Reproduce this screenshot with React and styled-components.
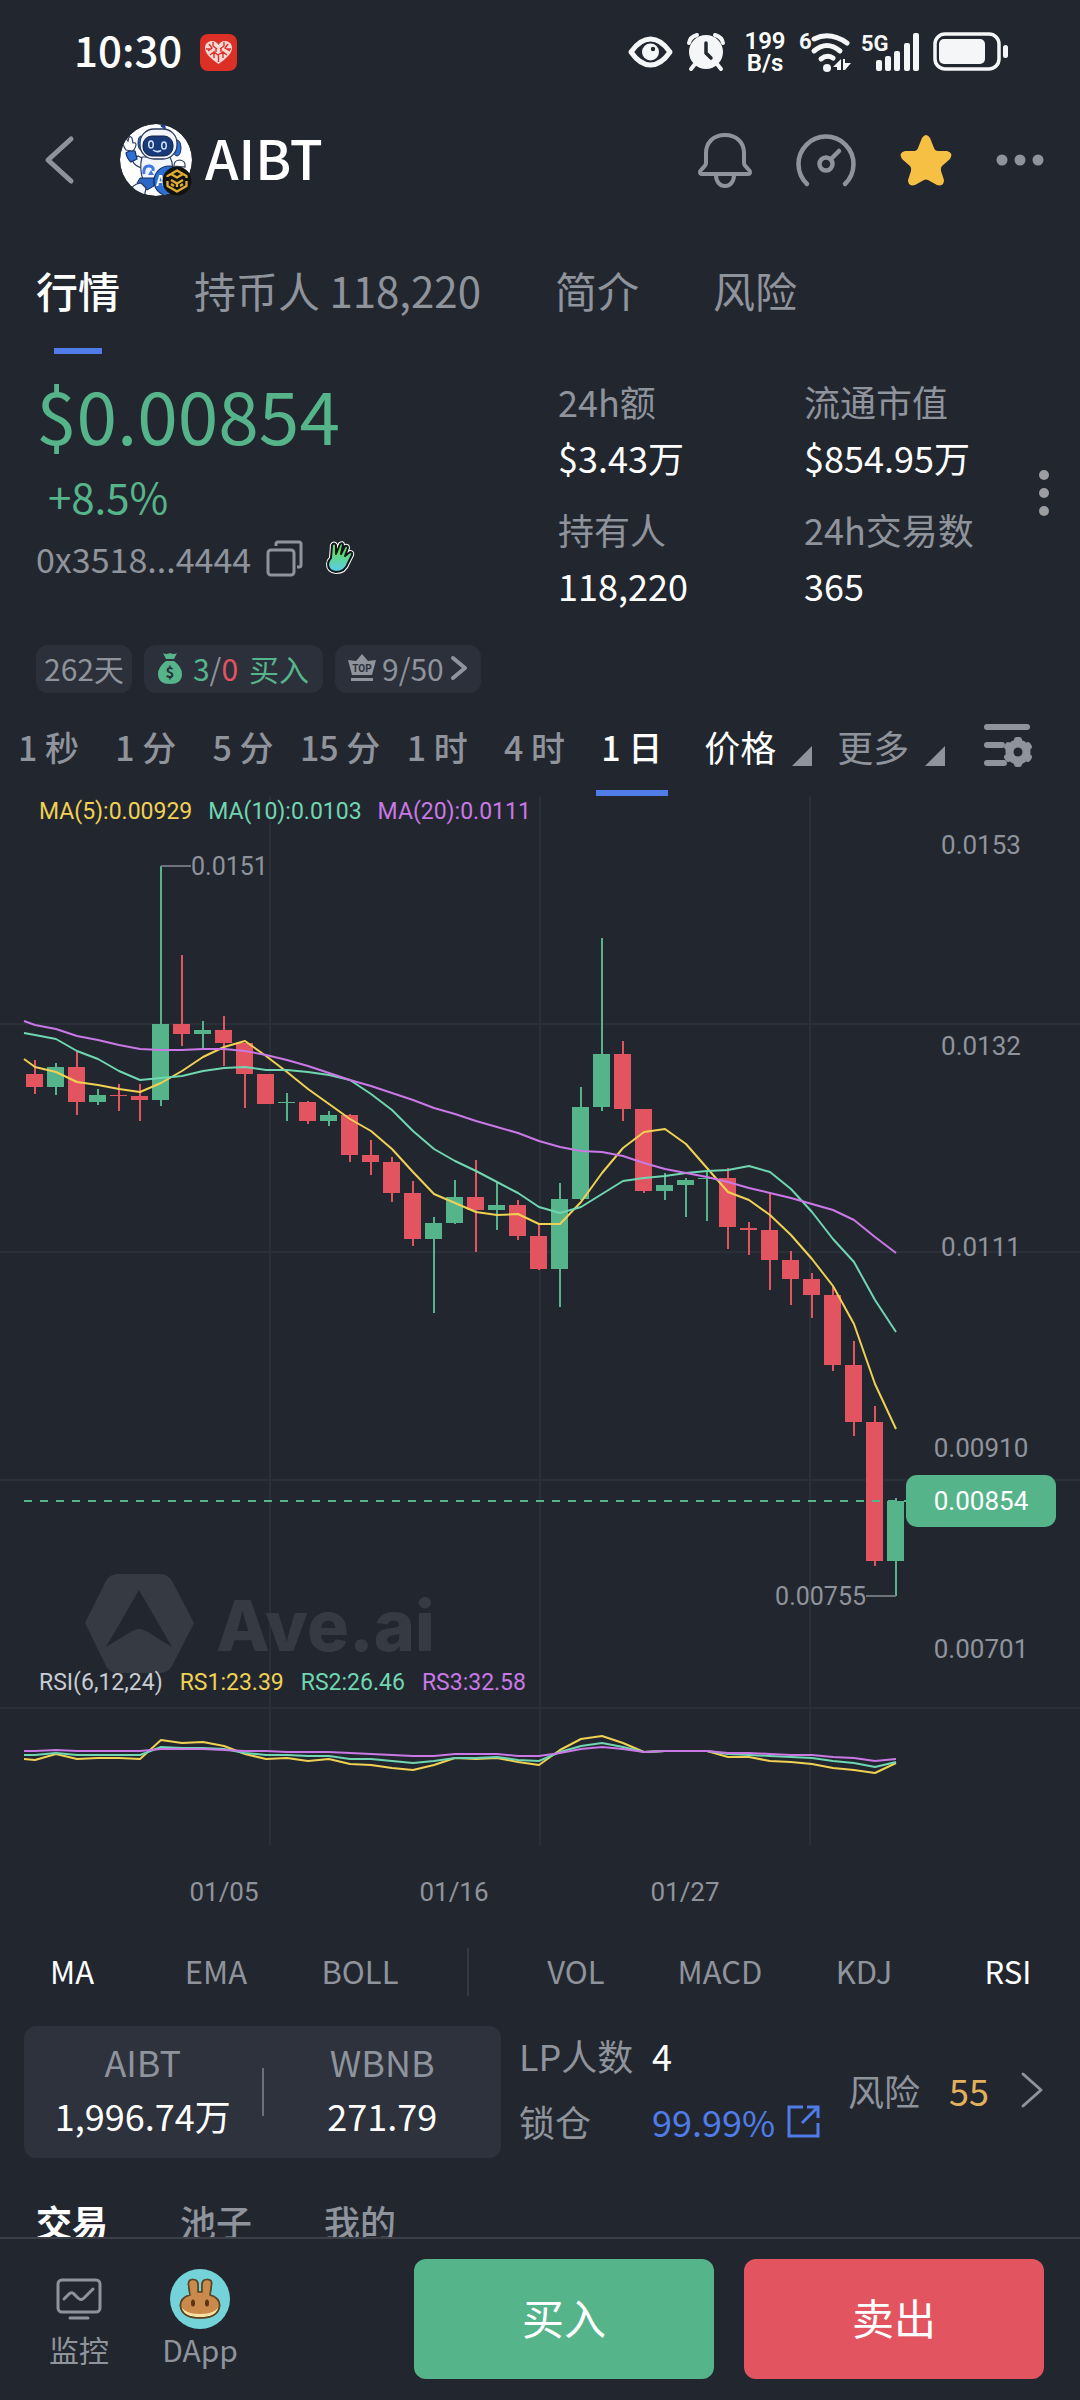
import React, { useState } from 'react';
import styled, { createGlobalStyle } from 'styled-components';

const GREEN = '#56b48a';
const RED = '#e25560';
const BLUE = '#4f7ce9';
const GRAY = '#8f939c';
const YELLOW = '#f0d154';
const MINT = '#6fd6b1';
const PURPLE = '#c978e6';

const GlobalStyle = createGlobalStyle`
    * {
        box-sizing : border-box;
    }
    body {
        margin : 0;
        background : #22272f;
        color : #ffffff;
        font-family : "Noto Sans CJK SC", "Noto Sans", sans-serif;
    }
    button {
        padding : 0;
        border : none;
        background : none;
        color : inherit;
        font : inherit;
        cursor : pointer;
    }
    svg {
        display : block;
        overflow : visible;
    }
`;

const Page = styled.div`
    display : flex;
    flex-direction : column;
    height : 100vh;
    overflow : hidden;
`;

const Content = styled.main`
    flex : 1;
    min-height : 0;
    overflow : hidden;
`;

/* status bar */

const StatusBar = styled.div`
    display : flex;
    align-items : center;
    height : 104px;
    padding : 0 71px 0 74px;
`;

const Clock = styled.span`
    margin-right : 18px;
    padding-bottom : 6px;
    font-size : 42px;
    font-weight : 500;
    line-height : 48px;
`;

const StatusIcons = styled.div`
    display : flex;
    align-items : center;
    margin-left : auto;
    gap : 12px;
    font-family : Roboto, sans-serif;
`;

const Speed = styled.div`
    display : flex;
    flex-direction : column;
    align-items : center;
    width : 48px;
    padding-left : 4px;
    font-size : 24px;
    font-weight : 600;
    line-height : 22px;
`;

/* header */

const Header = styled.header`
    display : flex;
    align-items : center;
    height : 112px;
    padding : 0 34px 0 44px;
`;

const Coin = styled.h1`
    display : flex;
    align-items : center;
    gap : 12px;
    margin : 0 auto 0 46px;
    font-size : 54px;
    font-weight : 500;
    line-height : 64px;
    span {
        padding-bottom : 6px;
    }
`;

const HeaderActions = styled.div`
    display : flex;
    align-items : center;
    gap : 44px;
    color : ${GRAY};
`;

const Tabs = styled.nav`
    display : flex;
    gap : 74px;
    margin-top : 43px;
    padding : 0 36px;
`;

const Tab = styled.button`
    display : flex;
    flex-direction : column;
    align-items : center;
    gap : 27px;
    color : ${props => props.$active ? '#ffffff' : GRAY};
    font-size : 42px;
    font-weight : ${props => props.$active ? 500 : 400};
    line-height : 62px;
    white-space : nowrap;
    &::after {
        content : "";
        width : 48px;
        height : 6px;
        background : ${props => props.$active ? BLUE : 'transparent'};
    }
`;

/* price summary */

const Summary = styled.section`
    display : grid;
    grid-template-columns : minmax(0, 87fr) 41fr 37fr 36px;
    padding : 23px 18px 0 36px;
`;

const Quote = styled.div`
    display : flex;
    flex-direction : column;
`;

const Price = styled.strong`
    color : ${GREEN};
    font-size : 73px;
    font-weight : 400;
    line-height : 72px;
`;

const Change = styled.span`
    margin-top : 23px;
    padding-left : 12px;
    color : ${GREEN};
    font-size : 42px;
    line-height : 48px;
`;

const Address = styled.div`
    display : flex;
    align-items : center;
    height : 40px;
    margin-top : 18px;
    color : ${GRAY};
    font-size : 34px;
    button {
        margin : 0 22px 0 15px;
    }
`;

const StatColumn = styled.dl`
    margin : 0;
    font-size : 36px;
    line-height : 48px;
    white-space : nowrap;
    dt {
        color : ${GRAY};
    }
    dd {
        margin : 8px 0 24px;
    }
    dd:last-child {
        margin-bottom : 0;
    }
`;

const DotsButton = styled.button`
    display : flex;
    align-items : center;
    justify-content : center;
    color : ${GRAY};
`;

const Chips = styled.div`
    display : flex;
    gap : 12px;
    margin-top : 36px;
    padding : 0 36px;
`;

const Chip = styled.button`
    display : flex;
    align-items : center;
    gap : ${props => props.$gap || 0}px;
    height : 48px;
    padding : 0 ${props => props.$pad}px 2px;
    border-radius : 12px;
    background : #2b303a;
    color : ${GRAY};
    font-size : 30px;
    line-height : 46px;
    white-space : nowrap;
`;

const Up = styled.span`
    color : ${GREEN};
`;

const Down = styled.span`
    color : ${RED};
`;

/* timeframes */

const Frames = styled.div`
    display : flex;
    margin-top : 9px;
`;

const Frame = styled.button`
    display : flex;
    flex : 0 0 9%;
    flex-direction : column;
    align-items : center;
    gap : 20px;
    padding-top : 22px;
    color : ${props => props.$active ? '#ffffff' : GRAY};
    font-size : 34px;
    font-weight : 500;
    line-height : 46px;
    white-space : nowrap;
    &::after {
        content : "";
        width : 72px;
        height : 6px;
        background : ${props => props.$active ? BLUE : 'transparent'};
    }
`;

const FrameMenus = styled.div`
    display : flex;
    flex : 1;
    align-items : flex-start;
    gap : 25px;
    padding : 21px 46px 0 24px;
    > :last-child {
        margin-left : auto;
    }
`;

const FrameMenu = styled.button`
    display : flex;
    align-items : flex-end;
    gap : 16px;
    color : ${props => props.$active ? '#ffffff' : GRAY};
    font-size : 36px;
    line-height : 46px;
    &::after {
        content : "";
        margin-bottom : 3px;
        border-left : 20px solid transparent;
        border-bottom : 20px solid ${GRAY};
    }
`;

const Chart = styled.svg`
    width : 100%;
    height : auto;
    font-family : Roboto, sans-serif;
`;

/* indicators and pool */

const Indicators = styled.div`
    display : grid;
    grid-template-columns : 2fr 2fr 2fr 1fr 2fr 2fr 2fr 2fr;
    align-items : center;
    height : 92px;
`;

const Indicator = styled.button`
    padding-bottom : 2px;
    color : ${props => props.$active ? '#ffffff' : GRAY};
    font-size : 31px;
    line-height : 48px;
`;

const Divider = styled.span`
    justify-self : center;
    width : 2px;
    height : 48px;
    background : ${props => props.$color};
`;

const Pool = styled.section`
    display : grid;
    grid-template-columns : 477fr 305fr 202fr;
    align-items : center;
    column-gap : 18px;
    margin-top : 8px;
    padding : 0 36px 0 24px;
    font-size : 36px;
    line-height : 48px;
    color : ${GRAY};
    white-space : nowrap;
`;

const PoolCard = styled.div`
    display : grid;
    grid-template-columns : 1fr 2px 1fr;
    align-items : center;
    height : 132px;
    border-radius : 12px;
    background : #2d323c;
`;

const Reserve = styled.div`
    display : flex;
    flex-direction : column;
    gap : 6px;
    padding-bottom : 8px;
    text-align : center;
    b {
        color : #ffffff;
        font-weight : 400;
    }
`;

const Liquidity = styled.dl`
    display : grid;
    grid-template-columns : 133px 1fr;
    row-gap : 18px;
    margin : 0;
    padding-bottom : 8px;
    dd {
        margin : 0;
        color : #ffffff;
    }
    a {
        display : flex;
        align-items : center;
        gap : 12px;
        color : ${BLUE};
        text-decoration : none;
    }
`;

const Risk = styled.button`
    display : flex;
    align-items : center;
    justify-content : flex-end;
    padding-bottom : 4px;
    span {
        margin : 0 31px 0 29px;
        color : #e3b05d;
    }
`;

const ListTabs = styled.div`
    display : flex;
    gap : 72px;
    margin-top : 38px;
    padding : 0 36px;
`;

const ListTab = styled.button`
    color : ${props => props.$active ? '#ffffff' : GRAY};
    font-size : 36px;
    font-weight : ${props => props.$active ? 700 : 500};
    line-height : 50px;
`;

/* bottom bar */

const BottomBar = styled.footer`
    display : flex;
    align-items : flex-start;
    padding : 20px 36px 21px 22px;
    border-top : 2px solid #3a3f48;
    background : #22272f;
`;

const Shortcut = styled.button`
    display : flex;
    flex : 0 0 ${props => props.$width}px;
    flex-direction : column;
    align-items : center;
    padding-top : 5px;
    color : ${GRAY};
    font-size : 30px;
    line-height : 30px;
`;

const ShortcutIcon = styled.span`
    display : flex;
    align-items : center;
    justify-content : center;
    height : 70px;
`;

const Trade = styled.button`
    flex : 1;
    height : 120px;
    margin-left : ${props => props.$gap}px;
    padding-bottom : 4px;
    border-radius : 12px;
    background : ${props => props.$color};
    color : #ffffff;
    font-size : 42px;
    line-height : 60px;
`;

/* chart geometry: candle i is centred on x(i), y values are chart units */

const STEP = 21;
const x = (i) => 34 + i * STEP;

// [top, bottom, high, low, rising]
const candles = [
    [284, 297, 270, 304, 0], [277, 297, 273, 305, 1], [277, 312, 261, 325, 0], [305, 312, 299, 315, 1],
    [305, 306, 294, 321, 0], [306, 310, 294, 331, 0], [234, 310, 76, 316, 1], [234, 244, 165, 256, 0],
    [240, 244, 231, 259, 1], [240, 253, 226, 276, 0], [253, 284, 253, 318, 0], [284, 314, 284, 314, 0],
    [312, 313, 303, 331, 1], [312, 331, 311, 334, 0], [325, 331, 321, 336, 1], [325, 365, 324, 372, 0],
    [365, 372, 350, 385, 0], [372, 403, 367, 412, 0], [403, 449, 391, 456, 0], [433, 449, 427, 523, 1],
    [407, 433, 390, 434, 1], [407, 420, 370, 462, 0], [415, 420, 392, 440, 1], [415, 446, 410, 450, 0],
    [446, 479, 435, 480, 0], [409, 479, 393, 517, 1], [317, 409, 297, 410, 1], [264, 317, 148, 321, 1],
    [264, 319, 251, 331, 0], [319, 401, 319, 403, 0], [395, 401, 383, 410, 1], [390, 395, 388, 427, 1],
    [388, 389, 381, 431, 1], [388, 437, 378, 459, 0], [438, 440, 432, 465, 0], [440, 470, 403, 500, 0],
    [470, 489, 461, 515, 0], [489, 505, 483, 528, 0], [505, 575, 497, 581, 0], [575, 632, 551, 646, 0],
    [632, 771, 616, 776, 0], [711, 771, 708, 806, 1],
];

const ma5 = [277, 282, 292, 295, 299, 302, 293, 281, 267, 257, 251, 266, 282, 299, 314, 329, 341, 359, 382, 404, 413, 422, 425, 424, 434, 434, 412, 383, 358, 342, 339, 354, 378, 402, 410, 425, 445, 469, 496, 534, 594, 639];
const ma10 = [245, 249, 261, 269, 281, 290, 288, 286, 281, 278, 277, 280, 280, 282, 285, 290, 304, 320, 341, 359, 371, 381, 392, 403, 417, 423, 417, 404, 391, 388, 386, 383, 381, 380, 376, 382, 399, 422, 449, 472, 510, 542];
const ma20 = [235, 239, 246, 250, 255, 259, 260, 260, 259, 259, 261, 265, 270, 276, 283, 290, 296, 303, 310, 318, 324, 331, 337, 343, 351, 357, 361, 362, 366, 373, 379, 383, 387, 392, 398, 403, 408, 414, 420, 430, 447, 463];
const rsi6 = [970, 964, 969, 968, 968, 969, 950, 953, 952, 956, 964, 969, 968, 971, 969, 974, 975, 978, 980, 975, 968, 969, 968, 972, 975, 960, 949, 946, 953, 962, 961, 961, 961, 967, 967, 971, 972, 974, 978, 980, 983, 973];
const rsi12 = [965, 963, 965, 965, 965, 965, 957, 958, 958, 959, 963, 965, 965, 966, 966, 969, 969, 971, 973, 971, 968, 968, 967, 970, 971, 962, 956, 953, 957, 962, 961, 961, 961, 964, 965, 966, 967, 968, 971, 973, 977, 972];
const rsi24 = [961, 960, 961, 961, 961, 961, 959, 959, 959, 960, 961, 961, 962, 962, 962, 963, 964, 965, 966, 966, 964, 964, 964, 966, 966, 963, 959, 957, 959, 962, 961, 961, 961, 963, 963, 964, 965, 965, 967, 968, 971, 969];

const prices = [['0.0153', 55], ['0.0132', 256], ['0.0111', 457], ['0.00910', 658], ['0.00701', 859]];
const dates = [['01/05', 224], ['01/16', 454], ['01/27', 685]];

const toPoints = (first, list) => `24,${first} ` + list.map((y, i) => `${x(i) + 1},${y}`).join(' ');

function Line({ first, list, color }) {
    return <polyline points={toPoints(first, list)} fill="none" stroke={color} strokeWidth="2" strokeLinejoin="round" />;
}

function KLine() {
    return (
        <Chart viewBox="0 6 1080 1130" role="img" aria-label="AIBT K线">
            <g stroke="#2b3038" strokeWidth="2">
                {[234, 462, 690, 918].map((y) => <line key={y} x1="0" x2="1080" y1={y} y2={y} />)}
                {[270, 540, 810].map((gx) => <line key={gx} x1={gx} x2={gx} y1="6" y2="1056" />)}
            </g>
            <g fill="#353a43">
                <path fillRule="evenodd" d="M117 784H160Q168 784 172 791L194 833L172 876Q168 883 160 883H117Q110 883 106 876L85 833L106 791Q110 784 117 784ZM139 800L106 857L132 841Q139 837 146 841L172 857Z" />
                <text x="216" y="861" fontFamily="Inter, sans-serif" fontSize="70" fontWeight="800">Ave.ai</text>
            </g>
            {candles.map(([top, bottom, high, low, rising], i) => (
                <g key={i} fill={rising ? GREEN : RED}>
                    <rect x={x(i)} y={high} width="2" height={low - high} />
                    <rect x={x(i) - 8} y={top} width="17" height={bottom - top} />
                </g>
            ))}
            <line x1="24" x2="906" y1="711" y2="711" stroke={GREEN} strokeWidth="2" strokeDasharray="8 8" />
            <Line first={269} list={ma5} color={YELLOW} />
            <Line first={243} list={ma10} color={MINT} />
            <Line first={231} list={ma20} color={PURPLE} />
            <Line first={969} list={rsi6} color={YELLOW} />
            <Line first={965} list={rsi12} color={MINT} />
            <Line first={961} list={rsi24} color={PURPLE} />
            <g stroke="#6d727b" strokeWidth="2">
                <line x1="161" x2="191" y1="76" y2="76" />
                <line x1="866" x2="896" y1="806" y2="806" />
            </g>
            <g fill={GRAY} fontSize="25">
                <text x="191" y="85">0.0151</text>
                <text x="866" y="815" textAnchor="end">0.00755</text>
            </g>
            <g fontSize="23">
                <text x="39" y="29">
                    <tspan fill={YELLOW}>MA(5):0.00929</tspan>
                    <tspan fill={MINT} dx="16">MA(10):0.0103</tspan>
                    <tspan fill={PURPLE} dx="16">MA(20):0.0111</tspan>
                </text>
                <text x="39" y="900">
                    <tspan fill="#c8ccd3">RSI(6,12,24)</tspan>
                    <tspan fill={YELLOW} dx="17">RS1:23.39</tspan>
                    <tspan fill={MINT} dx="17">RS2:26.46</tspan>
                    <tspan fill={PURPLE} dx="17">RS3:32.58</tspan>
                </text>
            </g>
            <g fill={GRAY} fontSize="26" textAnchor="middle">
                {prices.map(([label, y]) => <text key={label} x="981" y={y + 9}>{label}</text>)}
                {dates.map(([label, dx]) => <text key={label} x={dx} y="1111">{label}</text>)}
                <rect x="906" y="685" width="150" height="52" rx="11" fill={GREEN} />
                <text x="981" y="720" fill="#ffffff">0.00854</text>
            </g>
        </Chart>
    );
}

/* icons */

function HeartApp() {
    return (
        <svg width="37" height="37" viewBox="0 0 37 37">
            <rect width="37" height="37" rx="8" fill="#dc3027" />
            <path d="M18.500 30C10 24 5 19 5 14C5 9 9 7 12 7C15 7 17.500 9 18.500 11C19.500 9 22 7 25 7C28 7 32 9 32 14C32 19 27 24 18.500 30Z" fill="#f7d9d5" />
            <path d="M9 10L12 14L8 17M13 8V12L17 15M20 15L24 12V8M28 10L25 14L30 17M10 21L14 18V24M27 21L23 18V24M18.500 20V28M6 15H10M27 15H31M14 18L18 21L23 18M16 14V18M21 14V18" stroke="#dc3027" strokeWidth="1.400" fill="none" />
        </svg>
    );
}

function StatusEye() {
    return (
        <svg width="45" height="32" viewBox="0 0 45 32">
            <path d="M3 16Q12 3 22.500 3Q33 3 42 16Q33 29 22.500 29Q12 29 3 16Z" fill="none" stroke="#f5f6f8" strokeWidth="5" strokeLinejoin="round" />
            <circle cx="22.500" cy="16" r="8.500" fill="#f5f6f8" />
            <circle cx="25" cy="13" r="2.200" fill="#22272f" />
        </svg>
    );
}

function StatusAlarm() {
    return (
        <svg width="42" height="38" viewBox="-2 0 42 38">
            <path d="M2 10Q3 4 10 2M28 2Q35 4 36 10M8 31L4 36M30 31L34 36" stroke="#f5f6f8" strokeWidth="4" strokeLinecap="round" fill="none" />
            <circle cx="19" cy="19" r="17" fill="#f5f6f8" />
            <path d="M19 10V20L24 25" stroke="#22272f" strokeWidth="3.500" fill="none" strokeLinecap="round" />
        </svg>
    );
}

function StatusWifi() {
    return (
        <svg width="52" height="40" viewBox="0 0 52 40">
            <text x="0" y="17" fontSize="22" fontWeight="700" fill="#f5f6f8">6</text>
            <g stroke="#f5f6f8" strokeWidth="5" strokeLinecap="round" fill="none">
                <path d="M15 7Q31 -1 48 11" />
                <path d="M15 19Q28 8 41 19" />
                <path d="M22 27Q28 22 34 26" />
            </g>
            <circle cx="28" cy="36" r="4" fill="#f5f6f8" />
            <path d="M42 27V38H38V35H34ZM44 38V27H46V31H52L46 38Z" fill="#f5f6f8" />
        </svg>
    );
}

function StatusSignal() {
    return (
        <svg width="58" height="40" viewBox="0 0 58 40">
            <text x="-2" y="19" fontSize="22" fontWeight="700" fill="#f5f6f8">5G</text>
            <g fill="#f5f6f8">
                <rect x="13" y="28" width="6" height="11" rx="2" />
                <rect x="22" y="24" width="6" height="15" rx="2" />
                <rect x="31" y="19" width="6" height="20" rx="2" />
                <rect x="41" y="11" width="6" height="28" rx="2" />
                <rect x="50" y="1" width="6" height="38" rx="2" />
            </g>
        </svg>
    );
}

function StatusBattery() {
    return (
        <svg width="76" height="40" viewBox="0 0 76 40">
            <rect x="2" y="2" width="64" height="35" rx="10" fill="none" stroke="#f5f6f8" strokeWidth="3.500" />
            <rect x="6" y="7" width="46" height="25" rx="5" fill="#f5f6f8" />
            <rect x="70" y="13" width="5" height="13" rx="2.500" fill="#f5f6f8" />
        </svg>
    );
}

function Avatar() {
    return (
        <svg width="73" height="73" viewBox="0 0 73 73">
            <clipPath id="avatar"><circle cx="36" cy="36" r="36" /></clipPath>
            <g clipPath="url(#avatar)">
                <circle cx="36" cy="36" r="36" fill="#ffffff" />
                <path d="M42 0L45 5" stroke="#2b58b5" strokeWidth="3" />
                <circle cx="43" cy="1" r="2.500" fill="#1d3c86" />
                <path d="M12 36L18 32L26 36L23 44Q15 43 12 36Z" fill="#f3f7fd" stroke="#2a3a5c" strokeWidth="1.200" />
                <path d="M6 29Q9 26 15 27L17 35L11 38Q7 35 6 29Z" fill="#2e6fd3" stroke="#17305e" strokeWidth="1.200" />
                <path d="M6 26Q2 21 4 17Q5 13 8 17Q9 10 12 14L13 19Q16 18 16 21Q15 26 12 27Z" fill="#ffffff" stroke="#2a3a5c" strokeWidth="1.200" />
                <path d="M22 33H50Q55 42 50 56H23Q19 44 22 33Z" fill="#f3f7fd" stroke="#2a3a5c" strokeWidth="1.200" />
                <path d="M20 54H34V62L27 66L17 59Z" fill="#2b66c9" stroke="#17305e" />
                <path d="M11 69Q11 60 21 59L26 64L24 74H14Z" fill="#f3f7fd" stroke="#2a3a5c" strokeWidth="1.200" />
                <ellipse cx="57" cy="24" rx="4" ry="8" fill="#2e6fd3" stroke="#17305e" />
                <ellipse cx="21" cy="19" rx="3" ry="7" fill="#2e6fd3" stroke="#17305e" />
                <rect x="20" y="5" width="37" height="30" rx="14" fill="#f3f7fd" stroke="#2a3a5c" strokeWidth="1.300" />
                <rect x="23" y="12" width="30" height="20" rx="9" fill="#183a78" stroke="#101f45" />
                <g fill="none" stroke="#cfe2ff" strokeWidth="1.500">
                    <ellipse cx="31" cy="20.500" rx="2.300" ry="3.500" />
                    <ellipse cx="44" cy="21.500" rx="2.300" ry="3.500" />
                    <path d="M33 26Q37 29 41 26.500" />
                </g>
                <path d="M24 50Q23 41 30 42Q34 43 33 47" fill="none" stroke="#4178e6" strokeWidth="3" />
                <path d="M28 51L31 46L34 51Z" fill="#4178e6" />
                <circle cx="49" cy="57" r="15" fill="#2e6fd3" stroke="#17305e" strokeWidth="1.200" />
                <text x="36" y="62" fontSize="14" fontWeight="700" fill="#ffffff">A</text>
                <path d="M54 42Q54 36 60 36Q66 37 65 43Z" fill="#ffffff" stroke="#2a3a5c" strokeWidth="1.200" />
            </g>
            <circle cx="57" cy="57" r="14.500" fill="#12130f" />
            <g fill="none" stroke="#e0ae35" strokeWidth="2.300" strokeLinejoin="round">
                <path d="M51 50L57 46.500L63 50M47.500 53V52L51 50L57 53.500L63 50L66.500 52V54M47.500 57V62L57 67.500L66.500 62V57M51 56L57 59.500L63 56M57 59.500V63M51 60L54 62M63 60L60 62" />
            </g>
        </svg>
    );
}

function BellIcon() {
    return (
        <svg width="54" height="56" viewBox="0 0 54 56" fill="none" stroke="currentColor" strokeWidth="4" strokeLinejoin="round">
            <path d="M27 3C15 3 8 11 8 21V31C8 35 2 37 2 40Q2 42 4 42H50Q52 42 52 40C52 37 46 35 46 31V21C46 11 39 3 27 3Z" />
            <path d="M18 43C18 50 22 54 27 54C32 54 36 50 36 43" />
        </svg>
    );
}

function GaugeIcon() {
    return (
        <svg width="60" height="54" viewBox="0 0 60 54" fill="none" stroke="currentColor" strokeWidth="4.500" strokeLinecap="round">
            <path d="M11 51A27.500 27.500 0 1 1 49 51" />
            <circle cx="30" cy="31" r="6.500" />
            <path d="M35 26L43 18" />
        </svg>
    );
}

function StarIcon() {
    return (
        <svg width="52" height="52" viewBox="0 0 52 52">
            <path d="M22 4Q26 -2 30 4L34 14Q35 17 38 17L47 17Q54 19 50 25L42 32Q40 34 41 37L44 46Q44 53 37 51L28 46Q26 45 24 46L15 51Q8 53 8 46L11 37Q12 34 10 32L2 25Q-2 19 5 17L14 17Q17 17 18 14Z" fill="#f6c044" />
        </svg>
    );
}

function Dots({ vertical }) {
    return (
        <svg width={vertical ? 12 : 50} height={vertical ? 48 : 12} viewBox={vertical ? '0 0 12 48' : '0 0 50 12'} fill={vertical ? '#9b9da1' : '#8f939c'}>
            {[6, 24, 42].map((p) => vertical ? <circle key={p} cx="6" cy={p} r="5" /> : <circle key={p} cx={p} cy="6" r="5.500" />)}
        </svg>
    );
}

function CopyIcon() {
    return (
        <svg width="37" height="37" viewBox="0 0 37 37" fill="none" stroke={GRAY} strokeWidth="3">
            <rect x="2" y="10" width="26" height="25" rx="3" />
            <path d="M10 6V4Q10 2 12 2H33Q35 2 35 4V25Q35 27 33 27H31" />
        </svg>
    );
}

function HandIcon() {
    return (
        <svg width="30" height="34" viewBox="0 0 30 34">
            <defs>
                <linearGradient id="palm" x1="0" y1="0" x2="0" y2="1">
                    <stop offset="0.300" stopColor="#63d86a" />
                    <stop offset="1" stopColor="#58cdf0" />
                </linearGradient>
            </defs>
            {[['#ffffff', 4], ['#111418', 2]].map(([stroke, width]) => (
                <path key={stroke} d="M6 17L7 4Q9 1 11 4L11 13L15 3Q18 1 18 4L16 13L20 5Q23 4 23 7L20 15L25 11Q28 11 27 14L23 22Q20 31 11 31Q3 30 3 23Q3 20 6 17Z" fill="url(#palm)" stroke={stroke} strokeWidth={width} strokeLinejoin="round" />
            ))}
        </svg>
    );
}

function MoneyBag() {
    return (
        <svg width="24" height="32" viewBox="0 0 24 32">
            <path d="M5 1Q8 3 12 1Q16 3 19 1L16 7H8ZM8 9H16Q24 15 24 22Q24 32 12 32Q0 32 0 22Q0 15 8 9Z" fill={GREEN} />
            <text x="12" y="26" fontSize="15" fontWeight="700" textAnchor="middle" fill="#2b303a">$</text>
        </svg>
    );
}

function Crown() {
    return (
        <svg width="28" height="28" viewBox="0 0 28 28">
            <path d="M0 6L8 7L14 0L20 7L28 6L24 21H4ZM3 24H25V27H3Z" fill={GRAY} />
            <text x="14" y="18" fontFamily="Roboto, sans-serif" fontSize="10" fontWeight="700" textAnchor="middle" fill="#2b303a">TOP</text>
        </svg>
    );
}

function Chevron({ width, height, stroke = 3, left }) {
    const d = left ? `M${width - 3} 3L4 ${height / 2}L${width - 3} ${height - 3}` : `M3 3L${width - 3} ${height / 2}L3 ${height - 3}`;
    return (
        <svg width={width} height={height} fill="none" stroke={GRAY} strokeWidth={stroke} strokeLinecap="round" strokeLinejoin="round">
            <path d={d} />
        </svg>
    );
}

function ChartSettings() {
    return (
        <svg width="50" height="46" viewBox="0 0 50 46">
            <path d="M3 4H43M3 22H18M3 40H20" stroke={GRAY} strokeWidth="6" strokeLinecap="round" />
            <circle cx="34" cy="29" r="15" fill="#22272f" />
            <circle cx="34" cy="29" r="8.500" fill="none" stroke={GRAY} strokeWidth="8" />
            {[0, 60, 120].map((a) => <rect key={a} x="30" y="14" width="8" height="30" rx="3" fill={GRAY} transform={`rotate(${a} 34 29)`} />)}
            <circle cx="34" cy="29" r="4.500" fill="#22272f" />
        </svg>
    );
}

function ExternalIcon() {
    return (
        <svg width="33" height="33" viewBox="0 0 33 33" fill="none" stroke={BLUE} strokeWidth="3">
            <path d="M16 2H2V31H31V18M20 2H31V13M31 2L15 18" />
        </svg>
    );
}

function MonitorIcon() {
    return (
        <svg width="46" height="42" viewBox="0 0 46 42" fill="none" stroke={GRAY} strokeWidth="3" strokeLinecap="round" strokeLinejoin="round">
            <rect x="2" y="2" width="42" height="32" rx="4" />
            <path d="M8 21L13 16Q16 13 19 17L22 20Q25 23 28 20L37 11M14 40H32" />
        </svg>
    );
}

function Pancake() {
    return (
        <svg width="60" height="60" viewBox="0 0 60 60">
            <circle cx="30" cy="30" r="30" fill="#73d3d9" />
            <g stroke="#5d4426" strokeWidth="1.600">
                <path d="M20 26L18.500 15Q18.500 10.500 23 10.500Q28 10.500 28 16V23H32V16Q32 10.500 37 10.500Q42 10.500 41.500 15L40 26Q50 29 49.500 37Q48 49 30 49Q12 49 10.500 37Q10 29 20 26Z" fill="#fbe2a0" />
                <path d="M20 26L18.500 15Q18.500 10.500 23 10.500Q28 10.500 28 16V23H32V16Q32 10.500 37 10.500Q42 10.500 41.500 15L40 26Q50 29 49.500 36Q46 45 30 45Q14 45 10.500 36Q10 29 20 26Z" fill="#c98a4b" stroke="none" />
                <path d="M20 26L18.500 15Q18.500 10.500 23 10.500Q28 10.500 28 16V23H32V16Q32 10.500 37 10.500Q42 10.500 41.500 15L40 26Q50 29 49.500 37Q48 49 30 49Q12 49 10.500 37Q10 29 20 26Z" fill="none" />
            </g>
            <ellipse cx="23" cy="34" rx="2" ry="3.500" fill="#5a3414" />
            <ellipse cx="37" cy="34" rx="2" ry="3.500" fill="#5a3414" />
        </svg>
    );
}

const tabs = ['行情', '持币人 118,220', '简介', '风险'];
const frames = ['1 秒', '1 分', '5 分', '15 分', '1 时', '4 时', '1 日'];
const mainIndicators = ['MA', 'EMA', 'BOLL'];
const subIndicators = ['VOL', 'MACD', 'KDJ', 'RSI'];
const listTabs = ['交易', '池子', '我的'];

function App() {
    const [tab, setTab] = useState(tabs[0]);
    const [frame, setFrame] = useState('1 日');
    const [main, setMain] = useState('MA');
    const [sub, setSub] = useState('RSI');
    const [list, setList] = useState(listTabs[0]);

    return (
        <>
            <GlobalStyle />
            <Page>
                <StatusBar>
                    <Clock>10:30</Clock>
                    <HeartApp />
                    <StatusIcons>
                        <StatusEye />
                        <StatusAlarm />
                        <Speed><span>199</span><span>B/s</span></Speed>
                        <StatusWifi />
                        <StatusSignal />
                        <StatusBattery />
                    </StatusIcons>
                </StatusBar>
                <Header>
                    <button aria-label="返回"><Chevron width={30} height={48} stroke={5} left /></button>
                    <Coin><Avatar /><span>AIBT</span></Coin>
                    <HeaderActions>
                        <button aria-label="提醒"><BellIcon /></button>
                        <button aria-label="仪表"><GaugeIcon /></button>
                        <button aria-label="收藏"><StarIcon /></button>
                        <button aria-label="更多操作"><Dots /></button>
                    </HeaderActions>
                </Header>
                <Content>
                    <Tabs>
                        {tabs.map((name) => <Tab key={name} $active={name === tab} onClick={() => setTab(name)}>{name}</Tab>)}
                    </Tabs>
                    <Summary>
                        <Quote>
                            <Price>$0.00854</Price>
                            <Change>+8.5%</Change>
                            <Address>
                                0x3518...4444
                                <button aria-label="复制"><CopyIcon /></button>
                                <HandIcon />
                            </Address>
                        </Quote>
                        <StatColumn>
                            <dt>24h额</dt>
                            <dd>$3.43万</dd>
                            <dt>持有人</dt>
                            <dd>118,220</dd>
                        </StatColumn>
                        <StatColumn>
                            <dt>流通市值</dt>
                            <dd>$854.95万</dd>
                            <dt>24h交易数</dt>
                            <dd>365</dd>
                        </StatColumn>
                        <DotsButton aria-label="详情"><Dots vertical /></DotsButton>
                    </Summary>
                    <Chips>
                        <Chip $pad={8}>262天</Chip>
                        <Chip $pad={14} $gap={11}>
                            <MoneyBag />
                            <span><Up>3</Up>/<Down>0</Down></span>
                            <Up>买入</Up>
                        </Chip>
                        <Chip $pad={13} $gap={6}>
                            <Crown />
                            <span>9/50</span>
                            <Chevron width={18} height={26} stroke={4} />
                        </Chip>
                    </Chips>
                    <Frames>
                        {frames.map((name) => <Frame key={name} $active={name === frame} onClick={() => setFrame(name)}>{name}</Frame>)}
                        <FrameMenus>
                            <FrameMenu $active>价格</FrameMenu>
                            <FrameMenu>更多</FrameMenu>
                            <button aria-label="图表设置"><ChartSettings /></button>
                        </FrameMenus>
                    </Frames>
                    <KLine />
                    <Indicators>
                        {mainIndicators.map((name) => <Indicator key={name} $active={name === main} onClick={() => setMain(name)}>{name}</Indicator>)}
                        <Divider $color="#333841" />
                        {subIndicators.map((name) => <Indicator key={name} $active={name === sub} onClick={() => setSub(name)}>{name}</Indicator>)}
                    </Indicators>
                    <Pool>
                        <PoolCard>
                            <Reserve>AIBT<b>1,996.74万</b></Reserve>
                            <Divider $color="#6b7079" />
                            <Reserve>WBNB<b>271.79</b></Reserve>
                        </PoolCard>
                        <Liquidity>
                            <dt>LP人数</dt>
                            <dd>4</dd>
                            <dt>锁仓</dt>
                            <dd><a href="#lock">99.99%<ExternalIcon /></a></dd>
                        </Liquidity>
                        <Risk>风险<span>55</span><Chevron width={24} height={38} /></Risk>
                    </Pool>
                    <ListTabs>
                        {listTabs.map((name) => <ListTab key={name} $active={name === list} onClick={() => setList(name)}>{name}</ListTab>)}
                    </ListTabs>
                </Content>
                <BottomBar>
                    <Shortcut $width={114}><ShortcutIcon><MonitorIcon /></ShortcutIcon>监控</Shortcut>
                    <Shortcut $width={128}><ShortcutIcon><Pancake /></ShortcutIcon>DApp</Shortcut>
                    <Trade $color={GREEN} $gap={150}>买入</Trade>
                    <Trade $color={RED} $gap={30}>卖出</Trade>
                </BottomBar>
            </Page>
        </>
    );
}

export default App;
